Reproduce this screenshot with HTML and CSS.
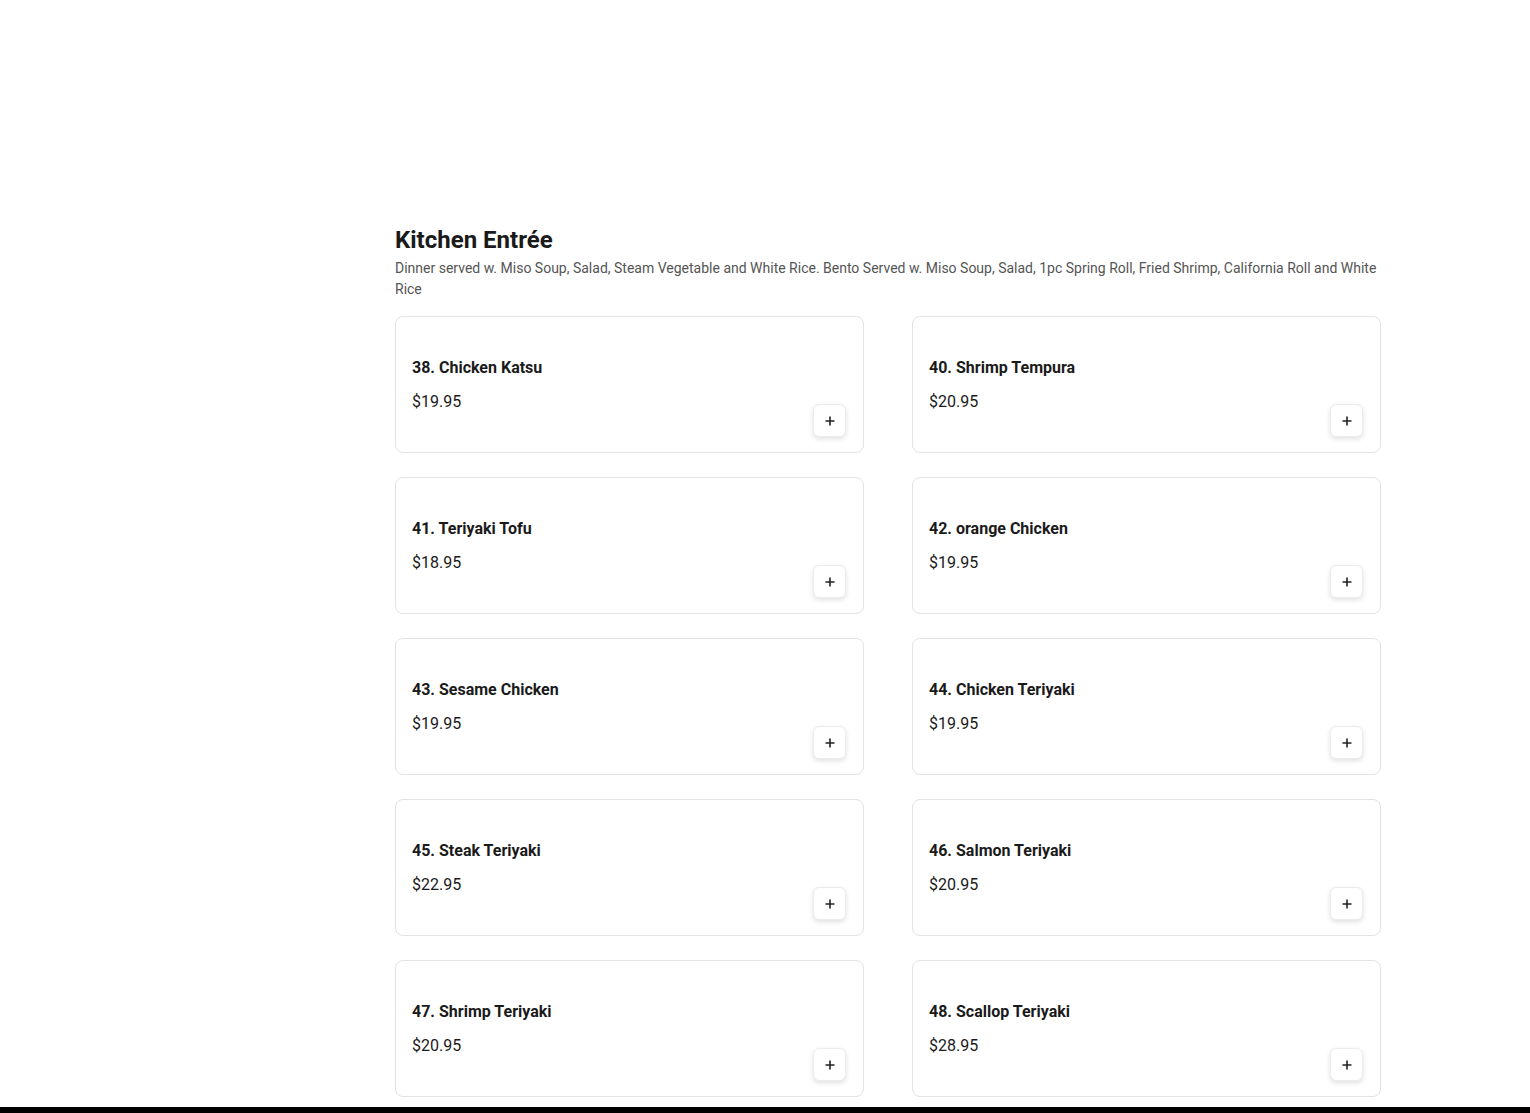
FILE: index.html
```html
<!DOCTYPE html>
<html lang="en">
<head>
<meta charset="utf-8">
<title>Kitchen Entrée</title>
<link rel="stylesheet" href="styles.css">
</head>
<body>
<div class="hero"></div>
<main class="layout">
  <aside class="sidebar"></aside>
  <section class="menu-section">
    <h2 class="section-title">Kitchen Entrée</h2>
    <p class="section-desc">Dinner served w. Miso Soup, Salad, Steam Vegetable and White Rice. Bento Served w. Miso Soup, Salad, 1pc Spring Roll, Fried Shrimp, California Roll and White Rice</p>
    <div class="items">
      <div class="item"><div class="info"><div class="name">38. Chicken Katsu</div><div class="price">$19.95</div></div><button class="add" aria-label="Add"><svg width="12" height="12" viewBox="0 0 12 12"><path d="M6 1.5v9M1.5 6h9" stroke="#222" stroke-width="1.6"/></svg></button></div>
      <div class="item"><div class="info"><div class="name">40. Shrimp Tempura</div><div class="price">$20.95</div></div><button class="add" aria-label="Add"><svg width="12" height="12" viewBox="0 0 12 12"><path d="M6 1.5v9M1.5 6h9" stroke="#222" stroke-width="1.6"/></svg></button></div>
      <div class="item"><div class="info"><div class="name">41. Teriyaki Tofu</div><div class="price">$18.95</div></div><button class="add" aria-label="Add"><svg width="12" height="12" viewBox="0 0 12 12"><path d="M6 1.5v9M1.5 6h9" stroke="#222" stroke-width="1.6"/></svg></button></div>
      <div class="item"><div class="info"><div class="name">42. orange Chicken</div><div class="price">$19.95</div></div><button class="add" aria-label="Add"><svg width="12" height="12" viewBox="0 0 12 12"><path d="M6 1.5v9M1.5 6h9" stroke="#222" stroke-width="1.6"/></svg></button></div>
      <div class="item"><div class="info"><div class="name">43. Sesame Chicken</div><div class="price">$19.95</div></div><button class="add" aria-label="Add"><svg width="12" height="12" viewBox="0 0 12 12"><path d="M6 1.5v9M1.5 6h9" stroke="#222" stroke-width="1.6"/></svg></button></div>
      <div class="item"><div class="info"><div class="name">44. Chicken Teriyaki</div><div class="price">$19.95</div></div><button class="add" aria-label="Add"><svg width="12" height="12" viewBox="0 0 12 12"><path d="M6 1.5v9M1.5 6h9" stroke="#222" stroke-width="1.6"/></svg></button></div>
      <div class="item"><div class="info"><div class="name">45. Steak Teriyaki</div><div class="price">$22.95</div></div><button class="add" aria-label="Add"><svg width="12" height="12" viewBox="0 0 12 12"><path d="M6 1.5v9M1.5 6h9" stroke="#222" stroke-width="1.6"/></svg></button></div>
      <div class="item"><div class="info"><div class="name">46. Salmon Teriyaki</div><div class="price">$20.95</div></div><button class="add" aria-label="Add"><svg width="12" height="12" viewBox="0 0 12 12"><path d="M6 1.5v9M1.5 6h9" stroke="#222" stroke-width="1.6"/></svg></button></div>
      <div class="item"><div class="info"><div class="name">47. Shrimp Teriyaki</div><div class="price">$20.95</div></div><button class="add" aria-label="Add"><svg width="12" height="12" viewBox="0 0 12 12"><path d="M6 1.5v9M1.5 6h9" stroke="#222" stroke-width="1.6"/></svg></button></div>
      <div class="item"><div class="info"><div class="name">48. Scallop Teriyaki</div><div class="price">$28.95</div></div><button class="add" aria-label="Add"><svg width="12" height="12" viewBox="0 0 12 12"><path d="M6 1.5v9M1.5 6h9" stroke="#222" stroke-width="1.6"/></svg></button></div>
    </div>
  </section>
</main>
<footer class="footer"></footer>
</body>
</html>
```
FILE: styles.css
```css
* { box-sizing: border-box; }
html, body { margin: 0; padding: 0; background: #fff; }
body {
  font-family: Roboto, "Liberation Sans", Arial, sans-serif;
  color: #1a1a1a;
}
.hero { height: 200px; }
.layout {
  max-width: 1280px;
  margin: 0 auto;
  padding: 24px 24px 0 0;
  display: grid;
  grid-template-columns: 246px 1fr;
  column-gap: 24px;
}
.section-title {
  margin: 0;
  font-size: 24px;
  line-height: 32px;
  font-weight: 700;
  color: #1a1a1a;
}
.section-desc {
  margin: 2px 0 0;
  font-size: 14px;
  line-height: 21px;
  color: #555;
}
.items {
  margin-top: 16px;
  display: grid;
  grid-template-columns: 1fr 1fr;
  column-gap: 48px;
  row-gap: 24px;
}
.item {
  height: 137px;
  border: 1px solid #e3e3e3;
  border-radius: 8px;
  padding: 16px 17px 15px 16px;
  display: flex;
  justify-content: space-between;
  align-items: flex-end;
  background: #fff;
}
.info { align-self: center; }
.name {
  font-size: 16px;
  line-height: 24px;
  font-weight: 700;
  color: #1a1a1a;
  margin-bottom: 10px;
}
.price {
  font-size: 16px;
  line-height: 24px;
  color: #1a1a1a;
}
.add {
  width: 33px;
  height: 33px;
  padding: 0;
  border: 1px solid #ececec;
  border-radius: 6px;
  background: #fff;
  box-shadow: 0 2px 5px rgba(0,0,0,0.12);
  display: flex;
  align-items: center;
  justify-content: center;
  cursor: pointer;
}
.add svg { display: block; }
.footer {
  margin-top: 10px;
  height: 40px;
  background: #000;
}
```
